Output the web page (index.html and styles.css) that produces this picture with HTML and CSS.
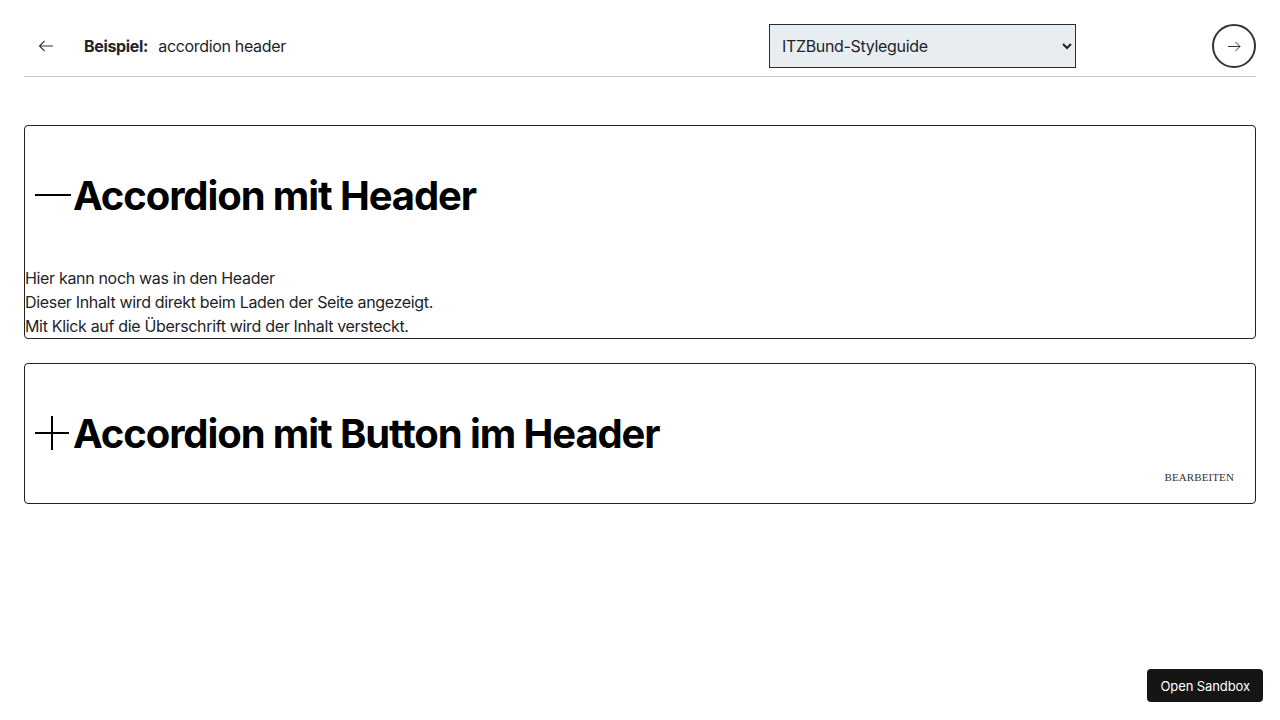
FILE: index.html
```html
<!DOCTYPE html>
<html lang="de">
<head>
<meta charset="utf-8">
<title>Beispiel: accordion header</title>
<link rel="stylesheet" href="styles.css">
</head>
<body>
<header class="topbar">
  <button class="back" aria-label="Zurück">
    <svg width="16" height="12" viewBox="0 0 16 12" fill="none" stroke="#333" stroke-width="1.1"><path d="M15 6H1.5M6.5 1L1.5 6l5 5"/></svg>
  </button>
  <div class="title"><strong>Beispiel:</strong> accordion header</div>
  <select class="theme">
    <option>ITZBund-Styleguide</option>
  </select>
  <button class="next" aria-label="Weiter">
    <svg width="14" height="11" viewBox="0 0 14 11" fill="none" stroke="#333" stroke-width="1"><path d="M1 5.5h12M8.5 1l4.5 4.5L8.5 10"/></svg>
  </button>
</header>

<main class="content">
  <section class="accordion">
    <h1 class="acc-head">
      <svg class="acc-icon" width="36" height="36" viewBox="0 0 36 36"><path d="M0 17h36" stroke="#000" stroke-width="2"/></svg>
      <span>Accordion mit Header</span>
    </h1>
    <div class="acc-body">
      <div>Hier kann noch was in den Header</div>
      <div>Dieser Inhalt wird direkt beim Laden der Seite angezeigt.</div>
      <div>Mit Klick auf die Überschrift wird der Inhalt versteckt.</div>
    </div>
  </section>

  <section class="accordion">
    <h1 class="acc-head">
      <svg class="acc-icon" width="36" height="36" viewBox="0 0 36 36"><path d="M0 17h34M17 0v34" stroke="#000" stroke-width="2"/></svg>
      <span>Accordion mit Button im Header</span>
    </h1>
    <span class="edit">Bearbeiten</span>
  </section>
</main>

<button class="sandbox">Open Sandbox</button>
</body>
</html>
```

FILE: styles.css
```css
* { box-sizing: border-box; }

html, body {
  margin: 0;
  padding: 0;
  background: #fff;
}

body {
  padding: 24px;
  font-family: Inter, "Noto Sans", sans-serif;
  font-size: 16px;
  line-height: 24px;
  letter-spacing: -0.33px;
  color: #212529;
}

.topbar {
  display: flex;
  align-items: center;
  padding-bottom: 8px;
  border-bottom: 1px solid #c8c8c8;
}

.back {
  width: 44px;
  height: 44px;
  padding: 0;
  border: none;
  background: transparent;
  display: flex;
  align-items: center;
  justify-content: center;
}

.title {
  margin-left: 16px;
  font-size: 16px;
  color: #212529;
}

.title strong {
  font-weight: 700;
  margin-right: 6px;
}

.theme {
  margin-left: auto;
  width: 307px;
  height: 44px;
  padding: 0 8px;
  font-family: Inter, "Noto Sans", sans-serif;
  font-size: 16px;
  letter-spacing: -0.33px;
  color: #212529;
  background: #e8edf1;
  border: 1px solid #2b2b2b;
  border-radius: 0;
}

.next {
  margin-left: 136px;
  width: 44px;
  height: 44px;
  padding: 0;
  border: 2px solid #333;
  border-radius: 50%;
  background: #fff;
  display: flex;
  align-items: center;
  justify-content: center;
}

.content {
  margin-top: 48px;
  display: flex;
  flex-direction: column;
  gap: 24px;
}

.accordion {
  position: relative;
  border: 1px solid #222;
  border-radius: 4px;
}

.acc-head {
  margin: 40px 0;
  padding-left: 10px;
  display: flex;
  align-items: center;
  gap: 2px;
  font-size: 40px;
  line-height: 60px;
  font-weight: 700;
  color: #000;
  letter-spacing: -1.1px;
}

.accordion + .accordion .acc-head {
  margin-bottom: 39px;
}

.acc-icon {
  flex: none;
}

.acc-body {
  color: #212529;
}

.edit {
  position: absolute;
  right: 21px;
  bottom: 19px;
  font-family: "Liberation Serif", serif;
  font-size: 11px;
  line-height: 14px;
  letter-spacing: 0.1px;
  text-transform: uppercase;
  color: #333;
}

.sandbox {
  position: fixed;
  right: 17px;
  bottom: 18px;
  height: 33px;
  padding: 0 13px 0 14px;
  border: none;
  border-radius: 4px;
  background: #151515;
  color: #fff;
  font-family: Inter, "Noto Sans", sans-serif;
  font-size: 13px;
  letter-spacing: -0.1px;
}
```
